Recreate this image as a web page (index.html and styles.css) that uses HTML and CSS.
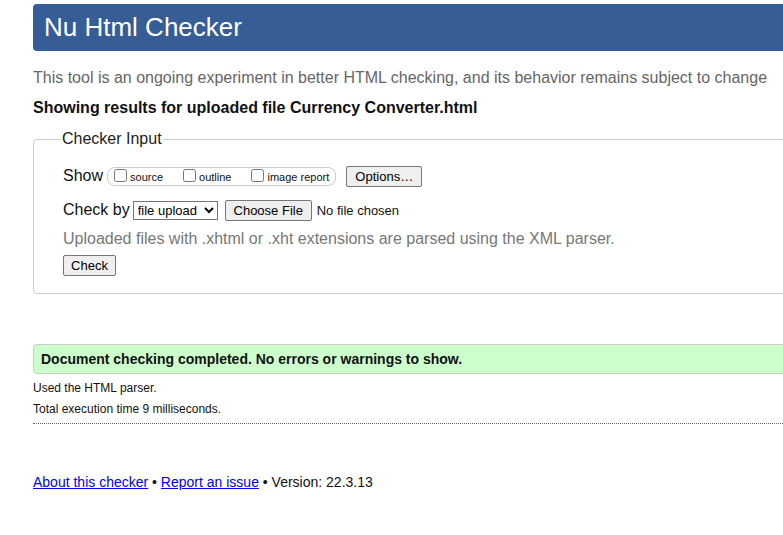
FILE: index.html
```html
<!DOCTYPE html>
<html>
<head>
<meta charset="utf-8">
<link rel="stylesheet" href="styles.css">
</head>
<body>
<div class="page">
  <h1 class="header">Nu Html Checker</h1>
  <p class="lede">This tool is an ongoing experiment in better HTML checking, and its behavior remains subject to change</p>
  <p class="showing">Showing results for uploaded file Currency Converter.html</p>
  <fieldset class="input">
    <legend>Checker Input</legend>
    <div class="row show-row">
      <span class="label">Show</span>
      <span class="checks">
        <label class="chk"><input type="checkbox">source</label>
        <label class="chk"><input type="checkbox">outline</label>
        <label class="chk last"><input type="checkbox">image report</label>
      </span>
      <button class="btn options">Options…</button>
    </div>
    <div class="row by-row">
      <span class="label">Check by</span>
      <select class="sel"><option>file upload</option></select>
      <button class="btn choose">Choose File</button>
      <span class="nofile">No file chosen</span>
    </div>
    <p class="hint">Uploaded files with .xhtml or .xht extensions are parsed using the XML parser.</p>
    <button class="btn check">Check</button>
  </fieldset>
  <div class="success">Document checking completed. No errors or warnings to show.</div>
  <p class="meta first">Used the HTML parser.</p>
  <p class="meta">Total execution time 9 milliseconds.</p>
  <hr class="dots">
  <p class="footer"><a href="#">About this checker</a> • <a href="#">Report an issue</a> • Version: 22.3.13</p>
</div>
</body>
</html>
```
FILE: styles.css
```css
html, body {
  margin: 0;
  padding: 0;
  background: #fff;
  overflow: hidden;
}
body {
  font-family: "Liberation Sans", Arial, sans-serif;
  color: #111;
}
.page {
  margin-left: 33px;
  width: 820px;
  padding-top: 4px;
}
.header {
  margin: 0;
  background: #365d95;
  color: #fff;
  font-weight: normal;
  font-size: 26px;
  line-height: 47px;
  height: 47px;
  padding-left: 11px;
  border-radius: 4px;
}
.lede {
  margin: 17px 0 0;
  font-size: 16px;
  line-height: 20px;
  color: #666;
}
.showing {
  margin: 10px 0 0;
  font-size: 16px;
  line-height: 20px;
  font-weight: bold;
}
.input {
  margin: 12px 0 0;
  border: 1px solid #ccc;
  border-radius: 4px;
  padding: 17px 29px 17px 29px;
  height: 128px;
  box-sizing: content-box;
}
.input legend {
  padding: 0 1px;
  margin-left: -2px;
  font-size: 16px;
  color: #222;
}
.row {
  display: flex;
  align-items: center;
}
.label {
  font-size: 16px;
}
.show-row {
  height: 22px;
}
.checks {
  display: inline-flex;
  align-items: center;
  margin-left: 4px;
  border: 1px solid #ccc;
  border-radius: 8px;
  height: 17px;
  padding: 0 6px 0 3px;
}
.chk {
  display: inline-flex;
  align-items: center;
  font-size: 11px;
  margin-right: 17px;
  padding-top: 2px;
}
.chk.last {
  margin-right: 0;
}
.chk input {
  margin: 0 3px 0 3px;
  width: 13px;
  height: 13px;
  position: relative;
  top: -2px;
}
.btn {
  font-family: "Liberation Sans", Arial, sans-serif;
  font-size: 13px;
  background: #efefef;
  border: 1px solid #767676;
  border-radius: 2px;
  color: #000;
  padding: 1px 6px;
  height: 21px;
}
.options {
  margin-left: 10px;
  width: 76px;
}
.by-row {
  margin-top: 12px;
  height: 22px;
}
.sel {
  margin-left: 3px;
  font-family: "Liberation Sans", Arial, sans-serif;
  font-size: 13px;
  height: 19px;
  width: 85px;
  border: 1px solid #767676;
  border-radius: 0;
  background: #fff;
  padding: 0;
}
.choose {
  margin-left: 7px;
  width: 87px;
}
.nofile {
  margin-left: 5px;
  font-size: 13px;
}
.hint {
  margin: 7px 0 0;
  font-size: 16px;
  line-height: 22px;
  color: #777;
}
.check {
  margin-top: 5px;
  width: 53px;
}
.success {
  margin-top: 50px;
  background: #ccffcc;
  border: 1px solid #ccc;
  border-radius: 4px;
  height: 28px;
  line-height: 28px;
  padding-left: 7px;
  font-size: 14px;
  font-weight: bold;
}
.meta {
  margin: 0;
  font-size: 12px;
  line-height: 21px;
}
.meta.first {
  margin-top: 4px;
}
.dots {
  margin: 3px 0 0;
  border: 0;
  border-top: 1px dotted #666;
  height: 0;
}
.footer {
  margin: 49px 0 0;
  font-size: 14px;
  line-height: 18px;
}
.footer a {
  color: #00e;
}
```
